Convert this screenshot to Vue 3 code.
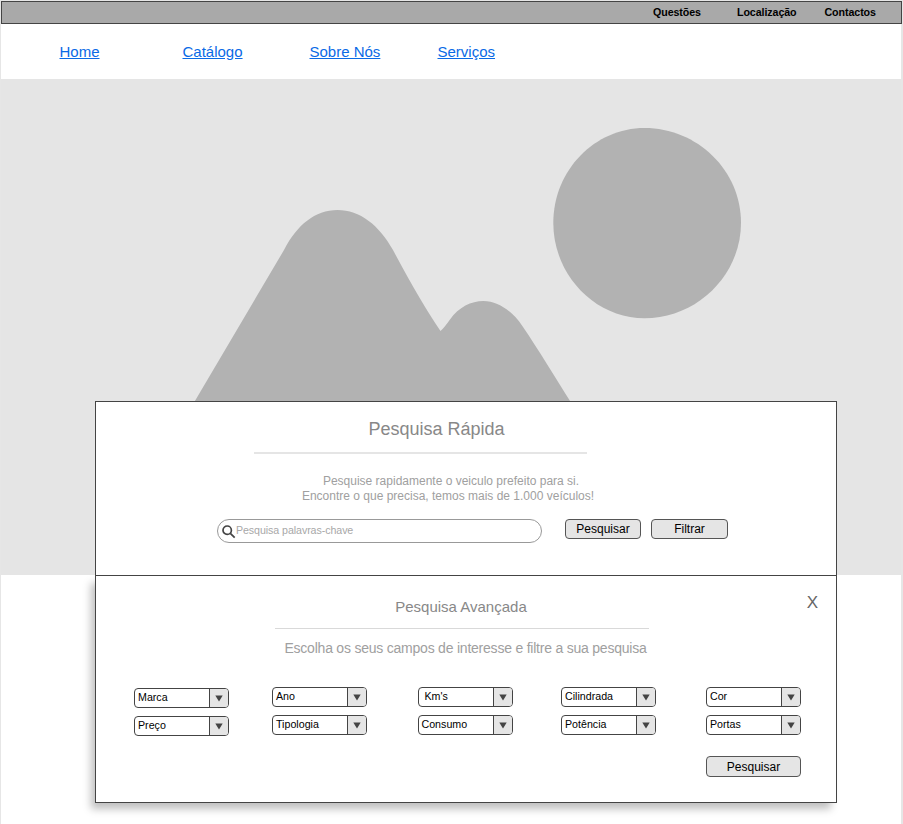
<script setup>
const topLinks = ['Questões', 'Localização', 'Contactos']
const navLinks = ['Home', 'Catálogo', 'Sobre Nós', 'Serviços']
const filterColumns = [
  { id: 'brand', fields: ['Marca', 'Preço'] },
  { id: 'year', fields: ['Ano', 'Tipologia'] },
  { id: 'usage', fields: ["Km's", 'Consumo'] },
  { id: 'engine', fields: ['Cilindrada', 'Potência'] },
  { id: 'body', fields: ['Cor', 'Portas'] },
]
</script>

<template>
  <div class="page">
    <header class="topbar">
      <a v-for="l in topLinks" :key="l" class="top-link">{{ l }}</a>
    </header>
    <nav class="nav">
      <a v-for="l in navLinks" :key="l" href="#" class="nav-link">{{ l }}</a>
    </nav>
    <div class="hero">
      <svg width="900" height="496" viewBox="1 79 900 496">
        <path d="M553.300 223C553.300 170 595 128 644.500 128C697 128 741 170 741 223C741 275 697 318.300 644.500 318.300C595 318.300 553.300 275 553.300 223Z" />
        <path d="M194 402.500L284 250C297 225 315 210 337.500 210S379 225 393 250Q420 301 440.500 331Q444 328 450 319.500C459 307 471 301 483.500 301C498 301 512 311 522 325.500C540 352 555 377 571 402.500Z" />
      </svg>
    </div>
    <main class="panels">
      <section class="quick">
        <h1>Pesquisa Rápida</h1>
        <div class="rule" />
        <p><span class="lead">Pesquise rapidamente o veiculo prefeito para si.</span><br>Encontre o que precisa, temos mais de 1.000 veículos!</p>
        <div class="search-row">
          <label class="search">
            <svg width="14" height="14" viewBox="0 0 14 14">
              <circle cx="5.200" cy="5.200" r="4.200" />
              <path d="M8.300 8.300L12.700 12.700" />
            </svg>
            <span>Pesquisa palavras-chave</span>
          </label>
          <button class="btn search-btn">Pesquisar</button>
          <button class="btn filter-btn">Filtrar</button>
        </div>
      </section>
      <section class="advanced">
        <span class="close">X</span>
        <h2>Pesquisa Avançada</h2>
        <div class="rule" />
        <p>Escolha os seus campos de interesse e filtre a sua pesquisa</p>
        <div class="filters">
          <div v-for="c in filterColumns" :key="c.id" class="column" :class="c.id">
            <div v-for="f in c.fields" :key="f" class="select">
              <span class="value">{{ f }}</span>
              <span class="arrow"><svg width="8" height="7" viewBox="0 0 8 7"><path d="M0.300 0.500H7.700L4 6.500Z" /></svg></span>
            </div>
          </div>
        </div>
        <button class="btn submit">Pesquisar</button>
      </section>
    </main>
  </div>
</template>

<style>
body {
  background: #fff;
  overflow: hidden;
}
</style>

<style scoped>
.page {
  box-sizing: border-box;
  width: 903px;
  height: 824px;
  border: solid #e6e6e6;
  border-width: 1px 2px 0 1px;
  font-family: "Liberation Sans", Arial, sans-serif;
}
.topbar {
  box-sizing: border-box;
  width: 901px;
  height: 23px;
  display: flex;
  padding-left: 651px;
  background: #a9a9a9;
  border: 1px solid #444;
}
.top-link {
  font: bold 10.67px/21px "Liberation Sans", Arial, sans-serif;
  letter-spacing: -0.08px;
  color: #000;
}
.top-link:nth-child(1) { width: 84px; }
.top-link:nth-child(2) { width: 87.500px; }
.nav {
  height: 55px;
  display: grid;
  grid-template-columns: 123px 127px 128px 100px;
  padding-left: 58.500px;
  align-items: center;
}
.nav-link {
  font-size: 15px;
  line-height: 18px;
  color: #0a6ae6;
}
.hero {
  width: 900px;
  height: 496px;
  background: #e5e5e5;
}
.hero svg {
  display: block;
  fill: #b2b2b2;
}
.panels {
  position: relative;
  width: 742px;
  margin: -174px 0 0 94px;
}
section {
  box-sizing: border-box;
  border: 1px solid #444;
  background: #fff;
  display: flex;
  flex-direction: column;
}
h1, h2, p { margin: 0; font-weight: normal; text-align: center; }
.quick {
  position: relative;
  z-index: 1;
  height: 175px;
}
h1 {
  margin: 16px 59px 0 0;
  font-size: 18px;
  line-height: 22px;
  color: #888;
}
.quick .rule {
  width: 333px;
  height: 2px;
  margin: 12px 0 0 158px;
  background: #e5e5e5;
}
.quick p {
  margin: 20px 36px 0 0;
  font-size: 12px;
  line-height: 15px;
  color: #a0a0a0;
}
.lead { padding-left: 6px; }
.search-row {
  display: flex;
  align-items: flex-start;
  margin: 15px 0 0 121px;
}
.search {
  box-sizing: border-box;
  width: 325px;
  height: 24px;
  display: flex;
  padding-left: 4px;
  border: 1px solid #999;
  border-radius: 12px;
  font-size: 10.67px;
  letter-spacing: -0.08px;
  line-height: 21px;
  color: #a8a8a8;
}
.search svg {
  margin: 5px 0 0;
  fill: none;
  stroke: #444;
  stroke-width: 1.700;
}
.btn {
  box-sizing: border-box;
  height: 20px;
  padding: 0;
  background: #e5e5e5;
  border: 1px solid #555;
  border-radius: 4px;
  font: 12px/18px "Liberation Sans", Arial, sans-serif;
  color: #000;
}
.search-btn { width: 76px; margin-left: 23px; }
.filter-btn { width: 77px; margin-left: 10px; }
.advanced {
  position: relative;
  height: 228px;
  margin-top: -1px;
  box-shadow: -5px 7px 8px -1px rgba(0, 0, 0, .25);
}
.close {
  position: absolute;
  top: 17px;
  right: 18px;
  font-size: 17px;
  line-height: 20px;
  color: #666;
}
h2 {
  margin: 21px 10px 0 0;
  font-size: 15px;
  line-height: 20px;
  color: #888;
}
.advanced .rule {
  width: 374px;
  height: 1px;
  margin: 11px 0 0 179px;
  background: #d9d9d9;
}
.advanced p {
  margin: 10px 1px 0 0;
  font-size: 14px;
  letter-spacing: -0.22px;
  line-height: 18px;
  color: #a0a0a0;
}
.filters {
  display: grid;
  grid-template-columns: 138px 146px 143px 145px 95px;
  margin: 30px 0 0 37.500px;
}
.column {
  display: flex;
  flex-direction: column;
  gap: 8px;
}
.brand { padding-top: 1px; }
.select {
  box-sizing: border-box;
  width: 95px;
  height: 20px;
  display: flex;
  justify-content: space-between;
  border: 1px solid #444;
  border-radius: 4px;
  overflow: hidden;
}
.value {
  padding-left: 3.500px;
  font-size: 10.67px;
  line-height: 17px;
  color: #000;
}
.usage .value { padding-left: 3px; }
.usage .select:first-child .value { padding-left: 6px; }
.arrow {
  width: 18px;
  background: #e5e5e5;
  border-left: 1px solid #444;
  display: flex;
  align-items: center;
  justify-content: center;
}
.arrow svg { fill: #444; }
.submit {
  width: 95px;
  height: 21px;
  margin: 20px 0 0 610px;
}
</style>
